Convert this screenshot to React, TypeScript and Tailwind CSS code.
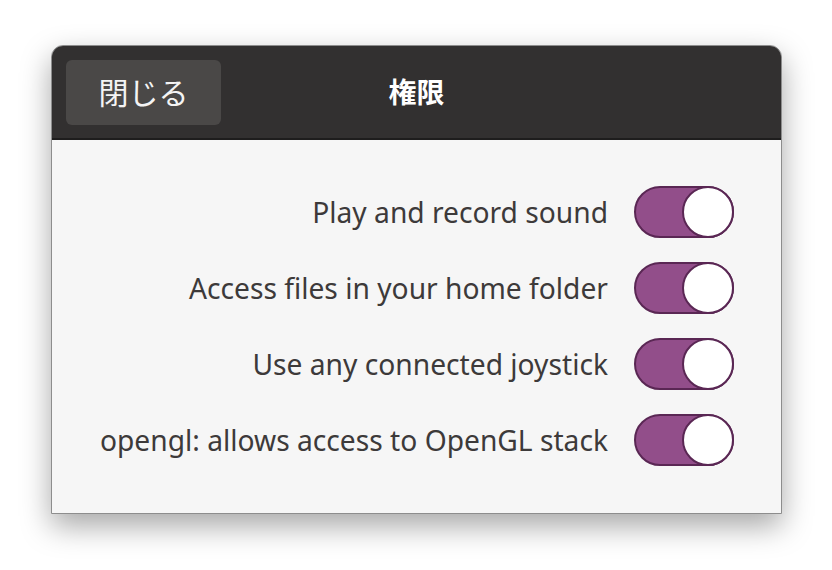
const permissions: string[] = [
  "Play and record sound",
  "Access files in your home folder",
  "Use any connected joystick",
  "opengl: allows access to OpenGL stack",
];

function Toggle(): JSX.Element {
  return (
    <div className="relative h-[52px] w-[100px] shrink-0 rounded-full border-2 border-[#5a2754] bg-[#924e8a]">
      <div className="absolute -right-[2px] -top-[2px] h-[52px] w-[52px] rounded-full border-2 border-[#5a2754] bg-white" />
    </div>
  );
}

export default function App(): JSX.Element {
  return (
    <div
      className="h-[570px] w-[832px] bg-white pl-[51px] pt-[45px]"
      style={{ fontFamily: '"Noto Sans", "Noto Sans CJK JP", sans-serif' }}
    >
      <div className="flex h-[469px] w-[731px] flex-col overflow-hidden rounded-t-[12px] border border-[#8d8d8d] bg-[#f6f6f6] shadow-[0_12px_30px_rgba(0,0,0,0.35)]">
        {/* Header bar */}
        <div className="relative flex h-[94px] shrink-0 items-center justify-center border-b-2 border-[#1e1d1d] bg-[#323030]">
          <button className="absolute left-[14px] top-[14px] flex h-[65px] w-[155px] items-center justify-center rounded-[6px] bg-[#4a4847] text-[30px] text-[#f4f4f4]">
            閉じる
          </button>
          <div className="text-[28px] font-bold text-white">権限</div>
        </div>

        {/* Permission rows */}
        <div className="flex flex-col items-end gap-[24px] pr-[47px] pt-[46px]">
          {permissions.map((label, i) => (
            <div key={i} className="flex h-[52px] items-center gap-[26px]">
              <span className="text-[28.2px] leading-none text-[#3d3a3a]">
                {label}
              </span>
              <Toggle />
            </div>
          ))}
        </div>
      </div>
    </div>
  );
}
